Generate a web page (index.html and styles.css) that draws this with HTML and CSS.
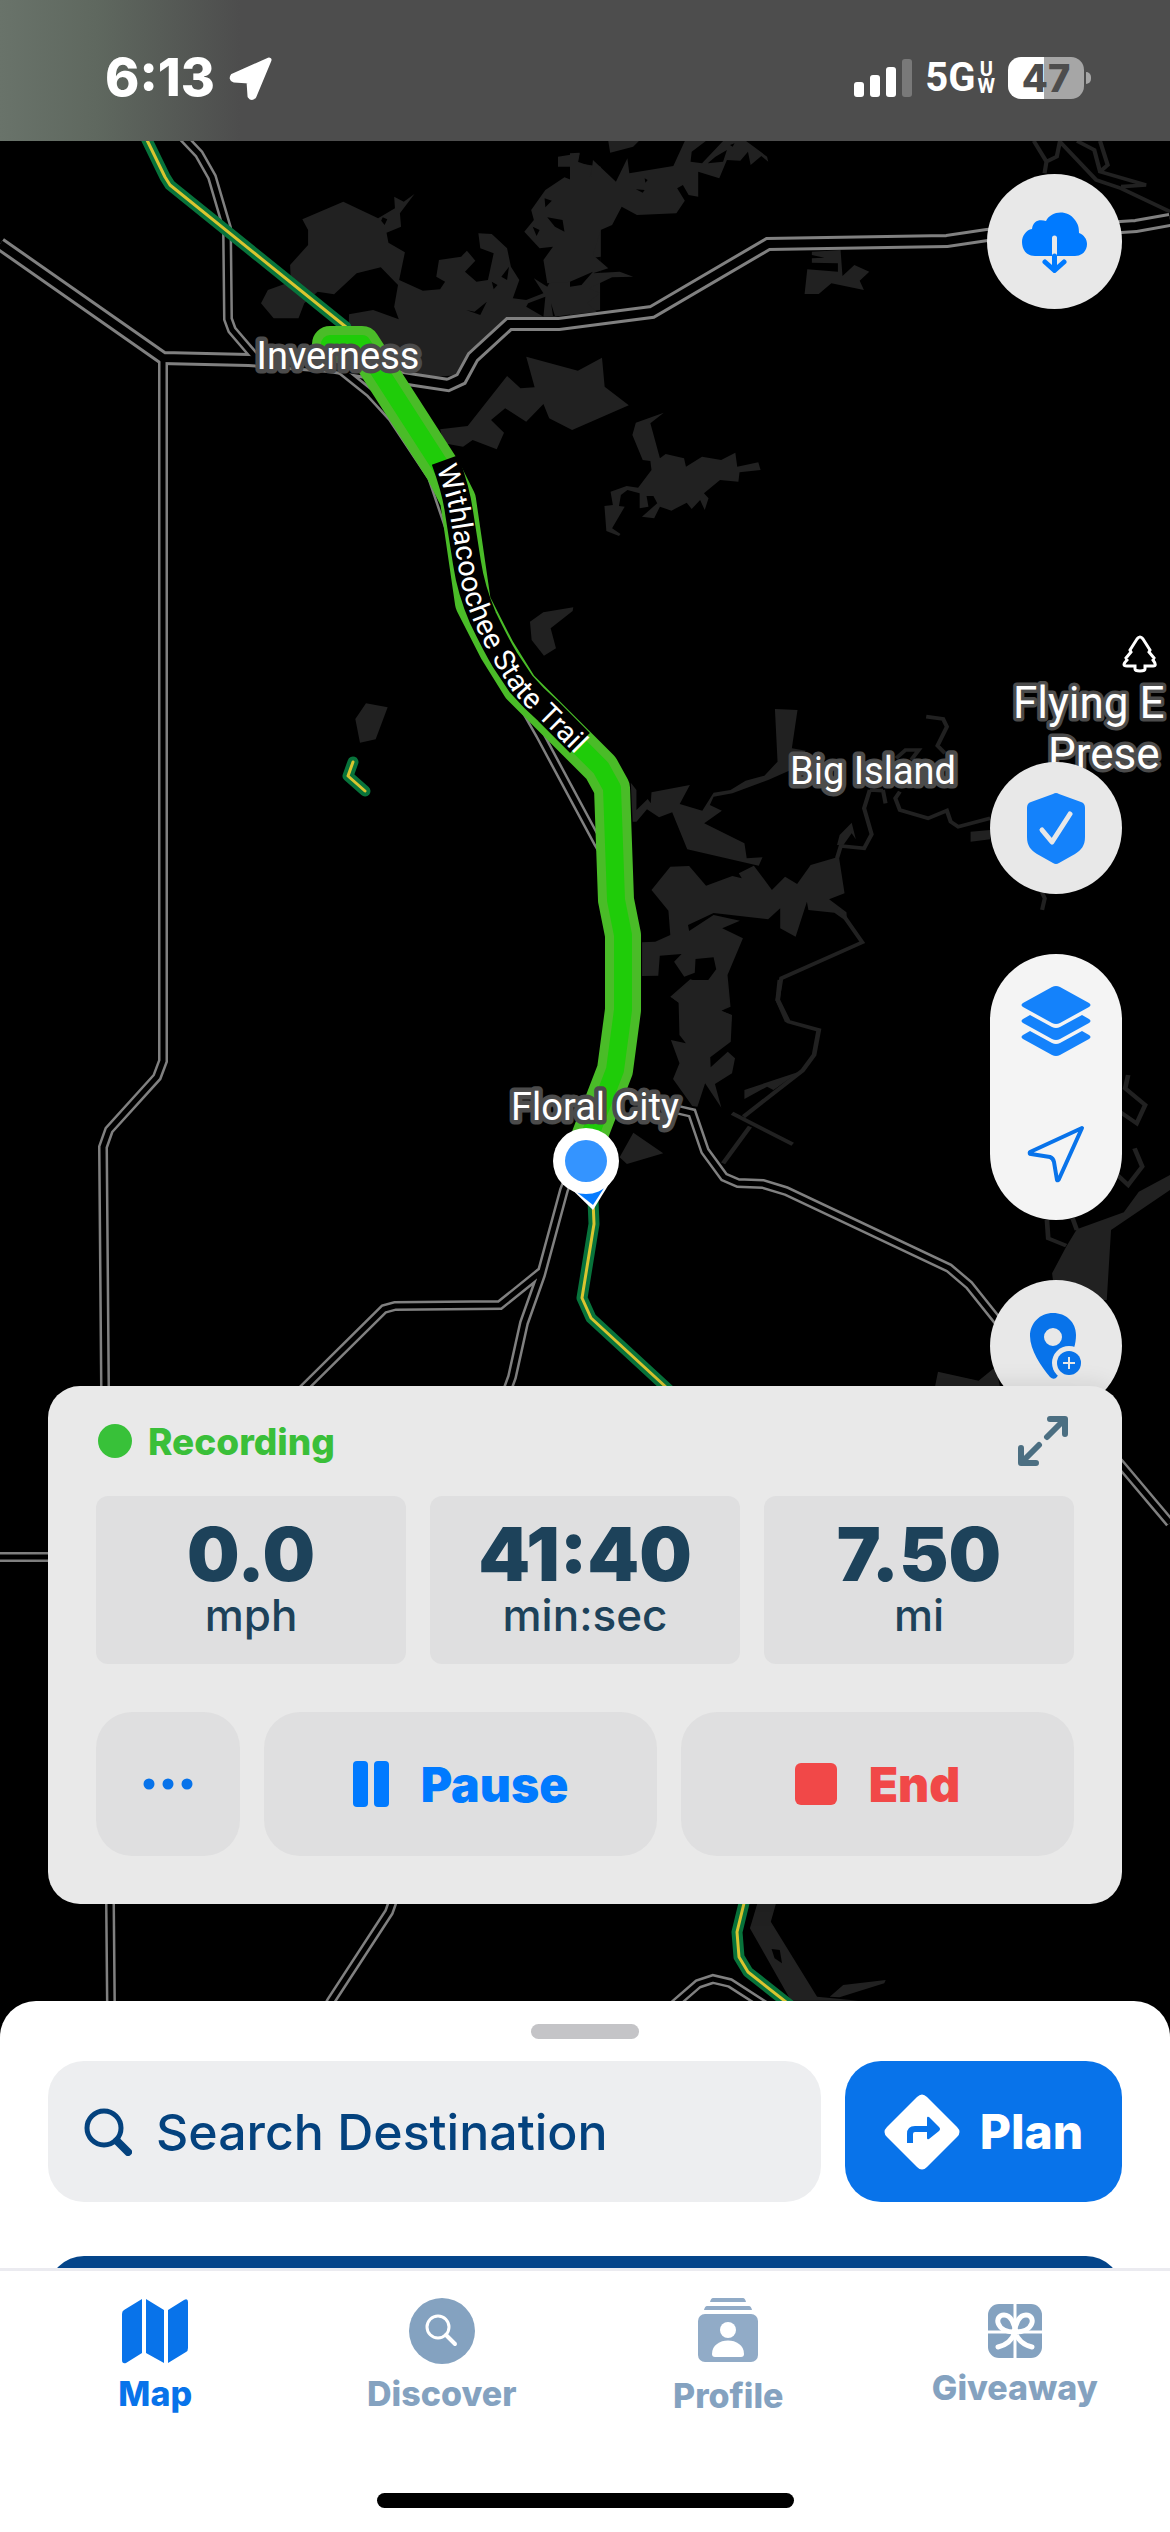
FILE: index.html
```html
<!DOCTYPE html>
<html lang="en">
<head>
<meta charset="utf-8">
<meta name="viewport" content="width=device-width, initial-scale=1">
<title>Trail map</title>
<link rel="stylesheet" href="styles.css">
</head>
<body>
<div class="screen">
  <svg class="map" viewBox="0 0 1170 2532" preserveAspectRatio="xMidYMin slice" role="img" aria-label="Trail map around Inverness and Floral City">
    <defs>
      <path id="r-west" d="M0 244 163 358 249 360 330 366 415 380 448 385 461 379 473 357 509 324 559 324 652 312 768 244 947 241 987 235 1121 227 1136 226 1170 220"/>
      <path id="r-local" d="M163 356V1061L157 1077 109 1130 103 1147 105 1386 110 1904 111 2010M181 135 199 154 212 177 227 228 228 319 232 330 256 358M335 365 370 393 392 417 432 477 450 530 480 630 540 735 598 843 620 880 620 1000 600 1100 564 1190 541 1275 524 1323 512 1377 500 1410M541 1272 500 1305 395 1306 384 1309 300 1392M0 1557H60M679 1110 692 1113 705 1151 724 1177 738 1183 763 1184 786 1191 949 1268 969 1285 1005 1330 1122 1466 1170 1523M395 1895 389 1912 331 2001 325 2012M668 2010 698 1984 713 1979 730 1983 772 2010"/>
      <path id="trail" d="M145 136 165 177 170 185 346 327M593 1200 594 1224 582 1298 591 1318 680 1400M746 1895 737 1932 739 1957 748 1972 800 2013"/>
      <path id="trail-spur" d="M353 762 348 776 365 791"/>
      <path id="track" d="M330 344H362L443 470 458 500 473 603 497 650 520 687 601 768 612 788 616 900 623 935V1010L615 1070 588 1140"/>
      <path id="trail-name" d="M436 468Q447 495 450 514L458 565Q462 595 475 625Q488 652 497 667L513 692Q525 706 540 719L596 775"/>
      <path id="trail-plate" d="M445 460Q456 490 459 512L467 563Q471 590 483 618Q496 645 505 660L521 684Q533 698 548 711L580 743"/>
    </defs>

    <g class="water">
      <g transform="translate(0 130) scale(.3827 .3333)">
        <path d="M790 268 897 215 988 265 1032 235 1030 200 1055 215 1083 192 1045 250 1048 290 1010 308 1015 338 1058 367 1043 450 1105 482 1150 478 1163 455 1140 440 1147 390 1205 380 1220 362 1242 392 1215 425 1245 455 1275 450 1290 370 1255 355 1250 310 1285 312 1325 355 1335 410 1357 450 1340 505 1375 510 1420 490 1395 445 1430 470 1450 430 1568 430 1568 540 1450 560 1330 562 1225 665 1195 735 1100 745 910 640 912 553 975 540 1042 568 1030 530 1040 465 995 412 932 430 873 493 830 485 795 520 780 565 715 565 682 520 700 480 760 455 758 405 805 345 805 300Z"/>
        <path d="M1458 80 1515 70 1510 100 1570 110 1570 150 1500 145 1500 110 1458 110ZM1425 180 1475 142 1515 160 1570 155V450L1430 460 1420 390 1445 350 1410 355 1370 305 1395 270 1388 240Z"/>
        <path d="M1375 680 1510 722 1573 683 1580 770 1643 826 1495 900 1435 865 1420 822 1375 875 1320 835 1283 870 1317 908 1298 958 1235 930 1210 950 1160 940 1150 898 1222 888 1325 738 1360 775 1397 772Z"/>
        <path class="land" d="M1423 205 1442 212 1425 232ZM1430 262 1470 270 1475 305 1450 290ZM1392 290 1410 300 1402 318ZM1218 540 1240 545 1272 515 1255 555ZM1285 455 1300 465 1290 478ZM1310 440 1330 410 1325 450ZM1380 520 1425 500 1420 560 1375 530ZM1440 520 1450 558 1445 558ZM1540 385 1570 380 1570 450 1555 440ZM1000 262 1012 268 1005 285 996 272Z"/>
      </g>
      <g transform="translate(570 130) scale(.3827 .3333)">
        <path d="M0 155 55 140 60 90 120 155 150 85 155 130 270 108 300 33 355 33 318 65 315 95 345 100 400 33 460 33 515 80 518 95 500 78 472 105 465 65 445 92 410 90 390 145 335 125V200L310 195 295 165 280 175 300 212 278 250 175 255 135 230 110 285 80 300 60 375 100 415 60 430 130 425 165 440 110 442 50 475 78 490 45 520 70 545 0 555ZM100 33H180L165 50 105 68ZM0 70 25 68 20 95 58 110 50 150 0 155Z"/>
        <path class="land" d="M195 145 203 150 197 158ZM172 178 195 180 190 188ZM380 80 410 60 400 95 360 100ZM418 45 430 40 425 50ZM0 455 60 425 30 465 0 470Z"/>
        <path d="M632 365 707 360 712 438 743 405 782 425 757 452 768 480 683 460 650 492 613 492 620 418 700 425 700 400 632 398 632 385 665 383 632 375Z"/>
        <path d="M172 878 245 848 210 880 235 985 250 972 298 985 303 1010 345 980 395 990 432 968 437 1010 492 997 498 1020 443 1027 440 1055 392 1050 350 1090 362 1105 352 1140 340 1110 318 1137 305 1118 265 1142 235 1130 220 1165 188 1160 228 1120 218 1098 200 1098 205 1130 182 1135 182 1090 150 1080 133 1095 128 1128 143 1130 110 1195 132 1212 128 1218 95 1203 90 1128 112 1125 106 1085 148 1068 178 1073 213 1020 210 993 190 990 163 915Z"/>
        <path class="stream" d="M1212 33 1245 95 1240 130M1245 95 1272 80 1280 35 1375 150 1440 175 1568 245M1325 33 1370 60 1385 125 1505 165 1440 170M1385 33 1405 105 1385 125"/>
      </g>
      <g transform="translate(300 420) scale(.3333)">
        <path d="M690 605 730 577 820 562 818 573 752 625 768 685 732 707 695 660ZM166 897 198 850 263 862 227 958 180 968Z"/>
      </g>
      <g transform="translate(580 600) scale(.3763 .3333)">
        <path d="M518 327 578 330 563 445 600 452 560 510 500 540 405 580 355 590 345 615 377 632 330 670 437 730 443 775 485 772 475 797 285 748 245 637 210 652 178 628 150 665 140 665 135 548 150 570 150 630 180 597 188 610 190 577 292 555 265 612 325 632 355 578 400 570 440 542 490 527 525 485Z"/>
        <path d="M190 870 240 800 290 798 335 857 405 828 430 835 422 820 462 797 510 870 545 830 577 852 613 795 688 770 703 880 662 898 708 937 710 965 676 938 607 930 603 905 573 1010 532 985 532 925 500 958 355 939 287 975 290 993 355 945 425 962 378 985 433 1015 392 1125 400 1220 375 1232 402 1245 402 1265 265 1265 263 1208 240 1190 293 1138 333 1152 362 1108 355 1072 307 1077 305 1118 277 1130 250 1085 270 1062 212 1067 208 1127 165 1128 165 1027 200 1025 240 1005 235 932ZM1038 695 1090 690 1090 718 1038 725Z"/>
        <path d="M683 735 690 705 722 668 733 718 722 700 700 735Z"/>
        <path class="stream" d="M683 775 693 738 755 745 775 703 755 625 770 570M805 570 812 610M850 575 838 595 850 630 925 655 975 632 985 665 1005 680 1090 655M920 350 965 357 975 380 950 437 970 460M840 475 865 450 900 450 880 480M1225 870 1235 895 1228 930M690 930 750 1027 535 1135 525 1200 550 1265M770 570 805 572"/>
      </g>
      <g transform="translate(500 980) scale(.4273 .3333)">
        <path d="M400 50 450 0H530L538 75 518 92 543 105 540 185 492 232 493 262 533 215 550 235 543 280 503 312 518 383 480 310 462 380 450 378 405 297 420 250 400 180 435 190 420 165 418 68ZM312 458 382 520 297 552 280 532ZM572 330 700 275 640 330 625 320 572 357Z"/>
        <path d="M1568 585 1495 635 1460 697 1350 748 1325 800 1292 880 1300 960H1420L1430 750 1568 630ZM1025 1175 1120 1202 1160 1160 1170 1220H1018Z"/>
        <path class="stream" d="M655 0 650 60 675 125 746 150 735 225 708 272 570 410M543 400 685 493M585 440 522 550M1470 285 1463 325 1510 375 1490 430 1450 395M1485 505 1503 560 1470 615 1445 585M1280 720 1283 775 1325 797M1340 715 1350 750"/>
      </g>
      <g transform="translate(0 1880) scale(.7462 .3333)">
        <path d="M1015 70 1040 70 1033 125 1095 350 1150 362 1060 362 1005 145ZM1112 350 1130 315 1187 300 1185 310 1125 352Z"/>
        <path class="land" d="M1034 207 1045 210 1048 250 1038 235Z"/>
      </g>
    </g>

    <use class="road-edge road-edge-major" href="#r-west"/>
    <use class="road-edge" href="#r-local"/>
    <use class="road-fill road-fill-major" href="#r-west"/>
    <use class="road-fill" href="#r-local"/>
    <g class="trail-edge"><use href="#trail"/><use href="#trail-spur"/></g>
    <g class="trail-line"><use href="#trail"/><use href="#trail-spur"/></g>
    <use class="track-edge" href="#track"/>
    <use class="track-line" href="#track"/>

    <use class="trail-plate" href="#trail-plate"/>
    <text class="map-text trail-text"><textPath href="#trail-name">Withlacoochee State Trail</textPath></text>
    <text class="map-text place" x="338" y="369" text-anchor="middle">Inverness</text>
    <text class="map-text place" x="873" y="784" text-anchor="middle">Big Island</text>
    <text class="map-text place" x="595" y="1120" text-anchor="middle">Floral City</text>
    <text class="map-text park" x="1013" y="718">Flying E</text>
    <text class="map-text park" x="1048" y="769">Prese</text>
    <path class="tree" d="M1137 639q3-4 6 0l7 11-1 2 5 6-1 2c3 4 3 6 0 6h-8v3q0 2-5 2t-5-2v-3h-8c-4 0-4-2 0-6l-1-2 5-6-1-2Z"/>

    <g>
      <path fill="#fff" d="M556 1174 593 1210 614 1176Z"/>
      <path fill="#067bff" d="M574 1190 593 1205 606 1185Z"/>
      <circle cx="586" cy="1161" r="33" fill="#fff"/>
      <circle cx="586" cy="1161" r="21" fill="#3494ff"/>
    </g>
  </svg>

  <header class="status">
    <div class="status-side status-time">
      <time class="clock">6:13</time>
      <svg width="44" height="44" viewBox="0 0 44 44" aria-hidden="true"><path fill="#fff" stroke="#fff" stroke-width="5" stroke-linejoin="round" d="M40 4 4 20q-2 3 1 4l15 1 1 15q2 3 4 0Z"/></svg>
    </div>
    <div class="status-side">
      <svg width="58" height="38" viewBox="0 0 58 38" aria-hidden="true"><g fill="#fff"><rect y="23" width="10" height="15" rx="3"/><rect x="16" y="16" width="10" height="22" rx="3"/><rect x="32" y="8" width="10" height="30" rx="3"/><rect x="48" width="10" height="38" rx="3" opacity=".25"/></g></svg>
      <span class="network">5G<span class="network-band"><span>U</span><span>W</span></span></span>
      <span class="battery"><span class="battery-level">47</span></span>
    </div>
  </header>

  <main class="stage">
    <div class="controls">
      <button class="round round-large" type="button" aria-label="Download map">
        <svg width="68" height="62" viewBox="0 0 68 62"><path fill="#007aff" d="M14 45C5 45 1 38 1 31c0-6 4-12 10-13C12 9 19 8 25 10 30 0 46-2 54 9c3 4 4 7 4 13 5 2 8 6 8 11 0 7-5 12-12 12Z"/><path d="M33.500 27V45" stroke="#e8e8e8" stroke-width="5" stroke-linecap="round"/><path d="M33.500 45V58M24 51l9.500 8.500L43 51" fill="none" stroke="#007aff" stroke-width="5" stroke-linecap="round" stroke-linejoin="round"/></svg>
      </button>
      <div class="control-group">
        <button class="round" type="button" aria-label="Safety">
          <svg width="60" height="72" viewBox="0 0 60 72"><path fill="#1482fb" d="M27 2q3-2 6 0l22 8q4 1 4 6v29c0 9-4 13-10 17L33 71q-3 2-6 0L11 62C5 58 1 54 1 45V16q0-5 4-6Z"/><path d="M16 38 26 50 44 22" fill="none" stroke="#e8e8e8" stroke-width="5" stroke-linecap="round" stroke-linejoin="round"/></svg>
        </button>
        <div class="pill">
          <button class="pill-button" type="button" aria-label="Map layers">
            <svg width="70" height="70" viewBox="0 0 70 70"><g fill="#1482fb"><path d="M31 1q4-2 8 0l29 16q3 2 0 4L39 37q-4 2-8 0L2 21q-3-2 0-4Z"/><path d="m2 33 7-4 22 12q4 2 8 0l22-12 7 4q3 2 0 4L39 53q-4 2-8 0L2 37q-3-2 0-4Z"/><path d="m2 49 7-4 22 12q4 2 8 0l22-12 7 4q3 2 0 4L39 69q-4 2-8 0L2 53q-3-2 0-4Z"/></g></svg>
          </button>
          <button class="pill-button" type="button" aria-label="My location">
            <svg width="58" height="58" viewBox="0 0 58 58"><path d="M55 3 3 27q-1 2 1 2l19 3q3 1 4 5l3 18q1 1 2-1Z" fill="none" stroke="#0873ea" stroke-width="4" stroke-linejoin="round"/></svg>
          </button>
        </div>
        <button class="round" type="button" aria-label="Add place">
          <svg width="54" height="68" viewBox="0 0 54 68"><path fill="#0873ea" fill-rule="evenodd" d="M24 1C37 1 47 10 47 23c0 18-12 34-20 43q-3 2-6-1C12 54 1 38 1 24 1 11 11 1 24 1Zm0 15a9 9 0 1 0 0 18 9 9 0 0 0 0-18Z"/><circle cx="40" cy="51" r="17" fill="#e8e8e8"/><circle cx="40" cy="51" r="12" fill="#0873ea"/><path d="M34 51H46M40 45V57" stroke="#e8e8e8" stroke-width="2"/></svg>
        </button>
      </div>
    </div>

    <section class="card" aria-label="Ride recording">
      <div class="card-head">
        <p class="recording">Recording</p>
        <button class="expand" type="button" aria-label="Expand">
          <svg width="50" height="50" viewBox="0 0 50 50"><path d="M29 21 46 4M32 3H47V18M21 29 4 46M3 32V47H18" fill="none" stroke="#4c6f82" stroke-width="6" stroke-linecap="round" stroke-linejoin="round"/></svg>
        </button>
      </div>
      <dl class="stats">
        <div class="stat"><dd>0.0</dd><dt>mph</dt></div>
        <div class="stat"><dd>41:40</dd><dt>min:sec</dt></div>
        <div class="stat"><dd>7.50</dd><dt>mi</dt></div>
      </dl>
      <div class="actions">
        <button class="action" type="button" aria-label="More">
          <svg width="50" height="12" viewBox="0 0 50 12" fill="#0873ea"><circle cx="6" cy="6" r="5.500"/><circle cx="25" cy="6" r="5.500"/><circle cx="44" cy="6" r="5.500"/></svg>
        </button>
        <button class="action action-pause" type="button">
          <svg width="36" height="46" viewBox="0 0 36 46" fill="#007aff"><rect width="15" height="46" rx="4"/><rect x="21" width="15" height="46" rx="4"/></svg>
          Pause
        </button>
        <button class="action action-end" type="button">
          <svg width="42" height="42" viewBox="0 0 42 42"><rect width="42" height="42" rx="6" fill="#f14848"/></svg>
          End
        </button>
      </div>
    </section>
  </main>

  <section class="sheet">
    <span class="handle"></span>
    <form class="search-row">
      <label class="search">
        <svg width="48" height="48" viewBox="0 0 48 48" aria-hidden="true"><circle cx="20" cy="20" r="17" fill="none" stroke="#04427e" stroke-width="5"/><path d="M33 33 44 44" stroke="#04427e" stroke-width="8" stroke-linecap="round"/></svg>
        <input type="text" placeholder="Search Destination" aria-label="Search Destination">
      </label>
      <button class="plan" type="button">
        <svg width="76" height="76" viewBox="0 0 76 76" aria-hidden="true"><path fill="#fff" d="M33 3q5-5 10 0l30 30q5 5 0 10L43 73q-5 5-10 0L3 43q-5-5 0-10Z"/><path d="M26 49V40q0-5 5-5H44" fill="none" stroke="#0873ea" stroke-width="6"/><path fill="#0873ea" d="M43 24q0-2 2-1l10 10q2 2 0 4L45 45q-2 1-2-1Z"/></svg>
        Plan
      </button>
    </form>
    <div class="peek"></div>
  </section>

  <nav class="tabs">
    <div class="tab-row">
      <a class="tab tab-current" href="#map" aria-current="page">
        <svg width="66" height="66" viewBox="0 0 66 66" fill="currentColor"><path d="M20 1V55L4 65Q0 66 0 62V16q0-3 2-4ZM24 1 42 12V65L24 55ZM46 12 62 2q4-2 4 2V50q0 3-2 4L46 65Z"/></svg>
        Map
      </a>
      <a class="tab" href="#discover">
        <svg width="66" height="66" viewBox="0 0 66 66"><circle cx="33" cy="33" r="33" fill="currentColor"/><circle cx="29" cy="29" r="11" fill="none" stroke="#fff" stroke-width="3"/><path d="M37 37 46 46" stroke="#fff" stroke-width="4" stroke-linecap="round"/></svg>
        Discover
      </a>
      <a class="tab" href="#profile">
        <svg width="60" height="70" viewBox="0 0 60 70"><g fill="#91abc7"><path d="M15 2H45q2 0 3 4H12q1-4 3-4ZM9 10H51q2 0 3 4H6q1-4 3-4Z"/><rect y="18" width="60" height="48" rx="7"/></g><circle cx="30" cy="34" r="8" fill="#fff"/><path fill="#fff" d="M14 58c0-18 32-18 32 0q0 3-3 3H17q-3 0-3-3Z"/></svg>
        Profile
      </a>
      <a class="tab" href="#giveaway">
        <svg width="54" height="54" viewBox="0 0 54 54"><rect width="54" height="54" rx="11" fill="currentColor"/><path d="M27 0V54M0 28H54" stroke="#fff" stroke-width="3"/><path d="M27 28C7 28 6 11 16 11c7 0 11 9 11 17C47 28 48 11 38 11c-7 0-11 9-11 17ZM27 28q-4 12-17 15M27 28q4 12 17 15" fill="none" stroke="#fff" stroke-width="5" stroke-linecap="round"/></svg>
        Giveaway
      </a>
    </div>
    <span class="home-bar"></span>
  </nav>
</div>
</body>
</html>
```
FILE: styles.css
```css
* { box-sizing: border-box; }

body {
  margin: 0;
  background: #000;
  font-family: Inter, "Liberation Sans", sans-serif;
}

button {
  padding: 0;
  border: 0;
  background: none;
  color: inherit;
  font: inherit;
}

svg { display: block; flex: none; }

.screen {
  position: relative;
  display: flex;
  flex-direction: column;
  min-height: 100vh;
}

/* Map canvas */
.map {
  position: absolute;
  inset: 0;
  width: 100%;
  height: 100%;
  fill: none;
}

.water path { fill: #212121; }
.water .land { fill: #000; }
.water .stream { fill: none; stroke: #212121; stroke-width: 11; }

.road-edge { stroke: #808080; stroke-width: 10; }
.road-fill { stroke: #000; stroke-width: 5; }
.road-edge-major { stroke-width: 14; }
.road-fill-major { stroke-width: 8; }

.trail-edge, .trail-line { stroke-linejoin: round; stroke-linecap: round; }
.trail-edge { stroke: #08733b; stroke-width: 11; }
.trail-line { stroke: #d9c530; stroke-width: 3; }

.track-edge, .track-line { stroke-linejoin: round; stroke-linecap: round; }
.track-edge { stroke: #4abc28; stroke-width: 36; }
.track-line { stroke: #1fcc09; stroke-width: 18; }

.map-text {
  fill: #fff;
  stroke: #4b4b4b;
  stroke-width: 9;
  stroke-linejoin: round;
  paint-order: stroke;
  font-family: Roboto, "Liberation Sans", sans-serif;
}
.place { font-size: 38px; }
.park { font-size: 44px; stroke-width: 7; }
.trail-text { font-size: 29px; stroke: none; }
.trail-plate { stroke: #000; stroke-width: 28; stroke-linejoin: round; }
.tree { stroke: #fff; stroke-width: 3; }

/* Status bar */
.status {
  position: relative;
  display: flex;
  justify-content: space-between;
  align-items: center;
  height: 141px;
  padding: 14px 79px 0 105px;
  background: linear-gradient(90deg, #69736a 0, #5f685f 96px, #4d4d4d 240px);
  color: #fff;
}
.status-side { display: flex; align-items: center; gap: 13px; }
.status-time { gap: 14px; }
.clock { font-size: 52px; font-weight: 800; }
.network {
  display: flex;
  align-items: center;
  gap: 2px;
  font-family: Roboto, "Liberation Sans", sans-serif;
  font-size: 40px;
  font-weight: 700;
}
.network-band {
  display: flex;
  flex-direction: column;
  align-items: center;
  font-size: 20px;
  line-height: 17px;
}
.battery {
  display: flex;
  align-items: center;
  gap: 2px;
}
.battery::after {
  content: "";
  width: 5px;
  height: 12px;
  border-radius: 0 5px 5px 0;
  background: #a6a6a6;
}
.battery-level {
  width: 76px;
  border-radius: 13px;
  background: linear-gradient(90deg, #fff 47%, #a6a6a6 47%);
  color: #4d4d4d;
  font-size: 38px;
  font-weight: 800;
  line-height: 42px;
  text-align: center;
}

/* Map controls */
.stage {
  position: relative;
  display: flex;
  flex: 1;
  flex-direction: column;
  padding: 33px 48px 97px;
}
.controls {
  display: flex;
  flex: 1;
  flex-direction: column;
  justify-content: space-between;
  align-items: flex-end;
}
.control-group {
  display: flex;
  flex-direction: column;
  gap: 60px;
  margin-bottom: -26px;
}
.round {
  display: grid;
  place-items: center;
  width: 132px;
  height: 132px;
  border-radius: 50%;
  background: #e8e8e8;
}
.round-large { width: 135px; height: 135px; }
.pill {
  display: flex;
  flex-direction: column;
  width: 132px;
  border-radius: 66px;
  background: #f4f4f4;
}
.pill-button {
  display: grid;
  place-items: center;
  height: 133px;
}

/* Recording card */
.card {
  position: relative;
  padding: 30px 48px 48px;
  border-radius: 32px;
  background: #e9e9e9;
  box-shadow: 0 0 24px rgba(0, 0, 0, .12);
}
.card-head {
  display: flex;
  justify-content: space-between;
  align-items: center;
  margin-bottom: 30px;
  padding: 0 6px 0 2px;
}
.recording {
  display: flex;
  align-items: center;
  gap: 16px;
  margin: 0;
  color: #3abf39;
  font-size: 37px;
  font-weight: 800;
}
.recording::before {
  content: "";
  width: 34px;
  height: 34px;
  border-radius: 50%;
  background: #38c139;
}
.stats {
  display: grid;
  grid-template-columns: repeat(3, 1fr);
  gap: 24px;
  margin: 0 0 48px;
}
.stat {
  display: flex;
  flex-direction: column;
  align-items: center;
  height: 168px;
  padding-top: 22px;
  border-radius: 12px;
  background: #dfdfe0;
  color: #1d425a;
}
.stat dd {
  margin: 0;
  font-size: 74px;
  font-weight: 900;
  line-height: 72px;
}
.stat dt {
  font-size: 44px;
  font-weight: 500;
  line-height: 50px;
}
.actions {
  display: grid;
  grid-template-columns: 144px 1fr 1fr;
  gap: 24px;
}
.action {
  display: flex;
  justify-content: center;
  align-items: center;
  gap: 32px;
  height: 144px;
  border-radius: 36px;
  background: #dfdfe0;
  font-size: 48px;
  font-weight: 900;
}
.action-pause { color: #007aff; }
.action-end { color: #f14848; }

/* Bottom sheet */
.sheet {
  position: relative;
  display: flex;
  flex-direction: column;
  align-items: center;
  padding: 23px 48px 0;
  border-radius: 36px 36px 0 0;
  background: #fff;
}
.handle {
  width: 108px;
  height: 15px;
  border-radius: 8px;
  background: #c4c4c7;
}
.search-row {
  display: flex;
  gap: 24px;
  width: 100%;
  margin: 22px 0 54px;
}
.search {
  display: flex;
  flex: 1;
  align-items: center;
  gap: 24px;
  min-width: 0;
  height: 141px;
  padding: 0 36px;
  border-radius: 36px;
  background: #edeef0;
}
.search input {
  flex: 1;
  min-width: 0;
  padding: 0;
  border: 0;
  outline: 0;
  background: none;
  color: #04427e;
  font: 500 50px Inter, "Liberation Sans", sans-serif;
}
.search input::placeholder { color: #04427e; opacity: 1; }
.plan {
  display: flex;
  flex: none;
  justify-content: center;
  align-items: center;
  gap: 20px;
  width: 277px;
  border-radius: 36px;
  background: #0873ea;
  color: #fff;
  font-size: 48px;
  font-weight: 800;
}
.peek {
  width: 100%;
  height: 12px;
  overflow: hidden;
}
.peek::before {
  content: "";
  display: block;
  height: 72px;
  border-radius: 36px;
  background: #04458a;
}

/* Tab bar */
.tabs {
  position: relative;
  display: flex;
  flex-direction: column;
  align-items: center;
  padding: 25px 12px 24px;
  border-top: 3px solid #ebebf0;
  background: #fff;
}
.tab-row {
  display: grid;
  grid-template-columns: repeat(4, 1fr);
  align-items: center;
  width: 100%;
  height: 120px;
  margin-bottom: 77px;
}
.tab {
  display: flex;
  flex-direction: column;
  align-items: center;
  gap: 10px;
  color: #84a2c0;
  font-size: 34px;
  font-weight: 800;
  line-height: 40px;
  text-decoration: none;
}
.tab-current { color: #0873ea; }
.home-bar {
  width: 417px;
  height: 15px;
  border-radius: 8px;
  background: #000;
}
```
